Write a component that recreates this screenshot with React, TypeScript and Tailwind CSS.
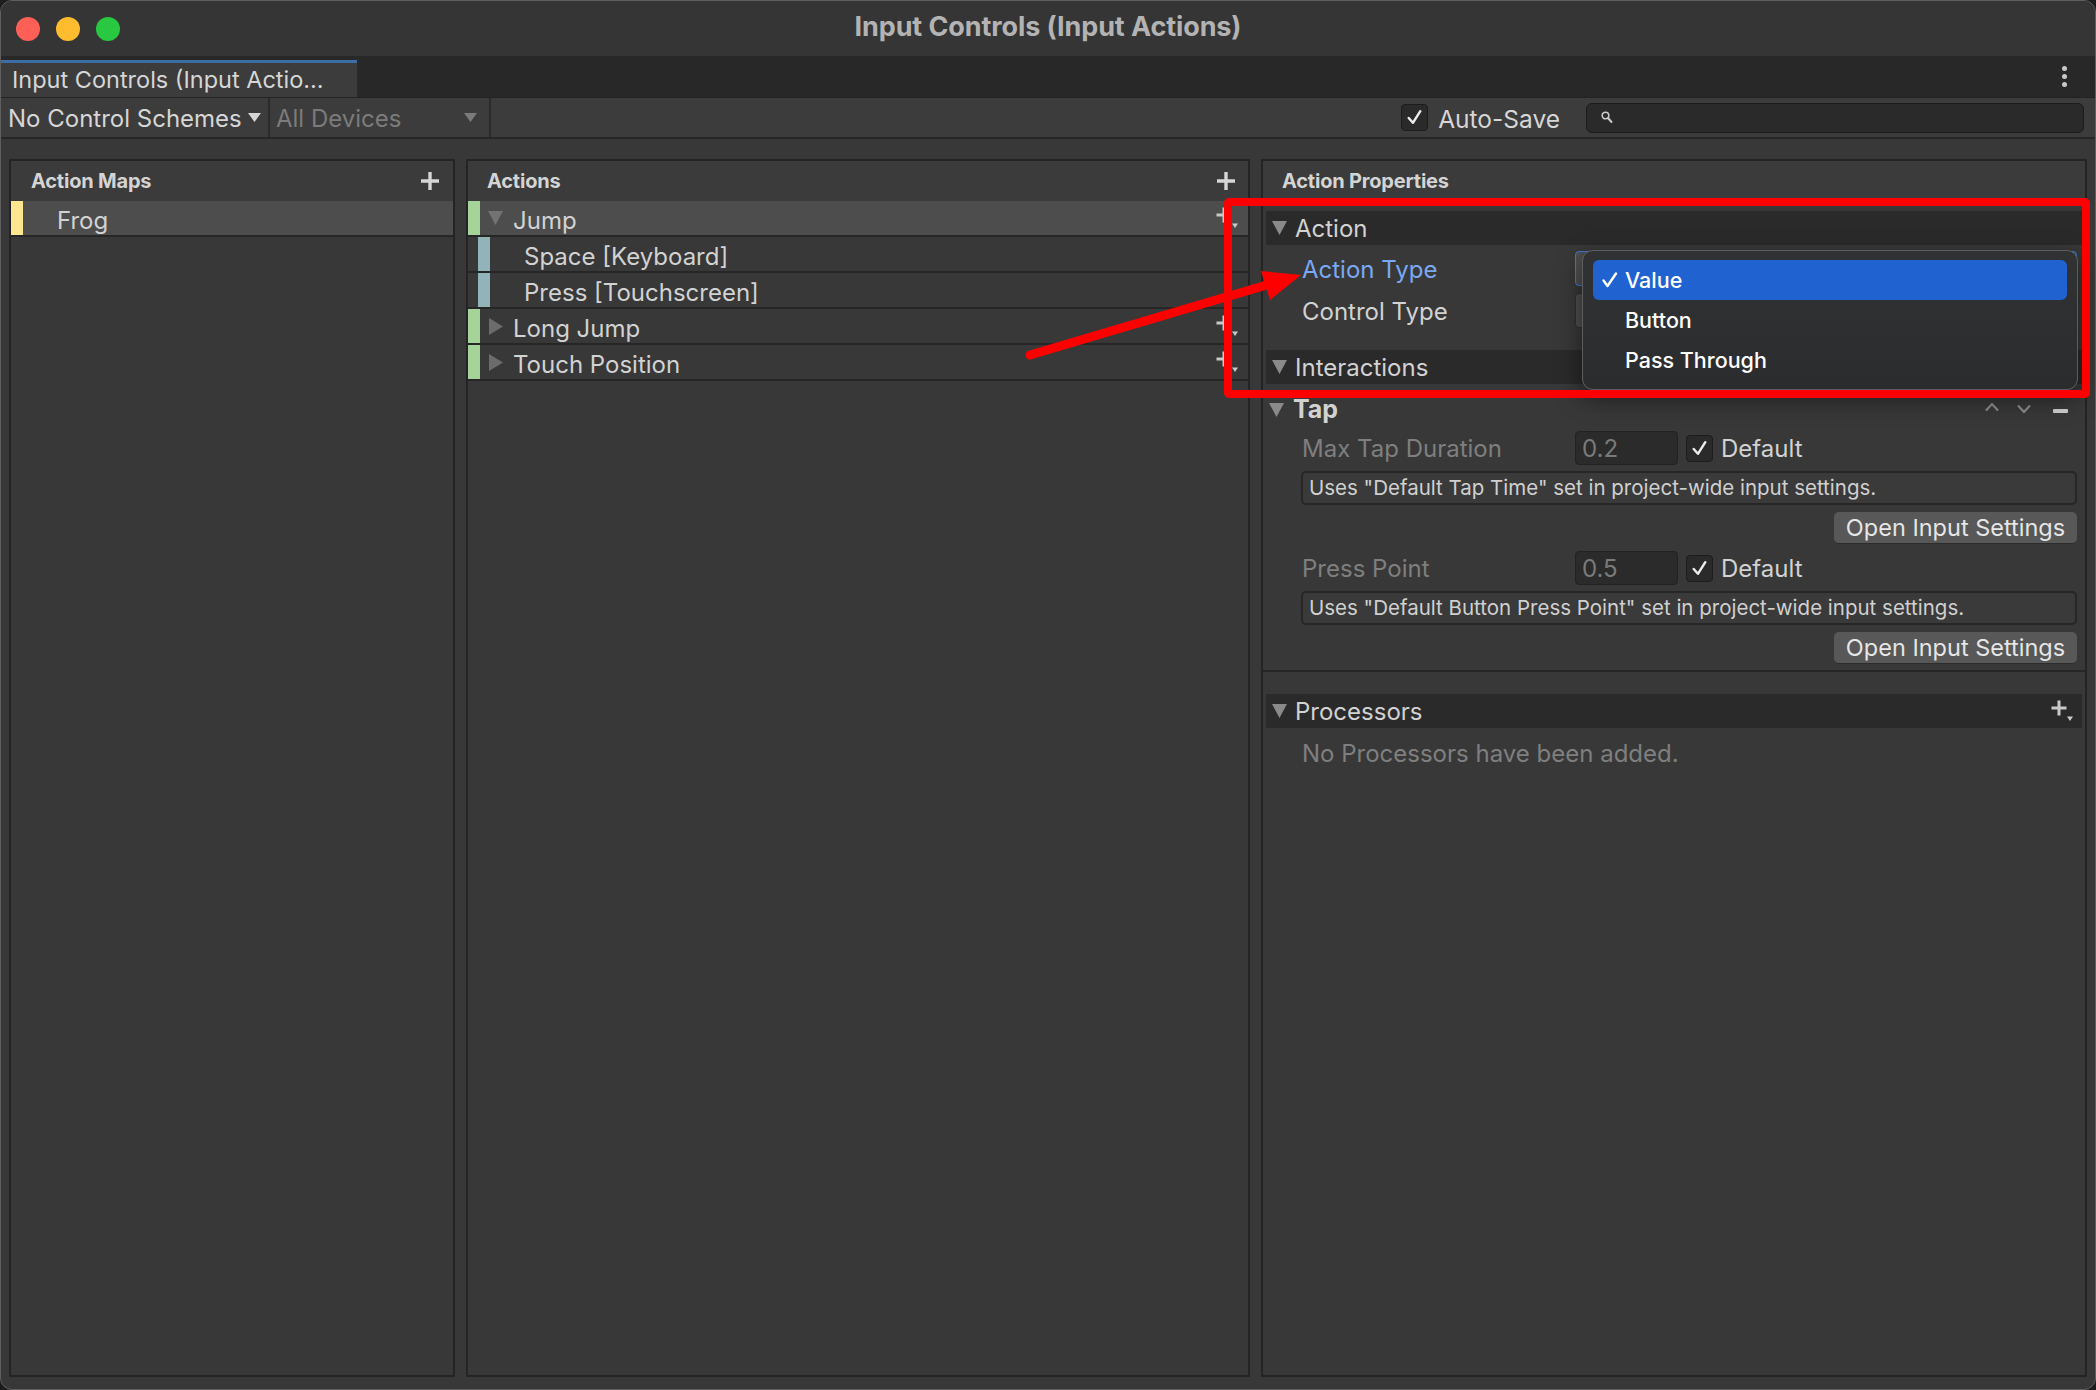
import React from "react";

const TXT = "text-[#d2d2d2]";

function TriDown({ color = "#7a7a7a" }: { color?: string }) {
  return (
    <svg width="15" height="14" viewBox="0 0 15 14" className="shrink-0">
      <path d="M0 0H15L7.5 14Z" fill={color} />
    </svg>
  );
}

function TriRight({ color = "#6f6f6f" }: { color?: string }) {
  return (
    <svg width="14" height="17" viewBox="0 0 14 17" className="shrink-0">
      <path d="M0 0L14 8.5L0 17Z" fill={color} />
    </svg>
  );
}

function Plus() {
  return (
    <svg width="20" height="20" viewBox="0 0 20 20" className="shrink-0">
      <path d="M10 1V19M1 10H19" stroke="#d6d6d6" strokeWidth="3.4" />
    </svg>
  );
}

function PlusDrop() {
  return (
    <svg width="24" height="24" viewBox="0 0 24 24" className="shrink-0">
      <path d="M9 1.5V16.5M1.5 9H16.5" stroke="#c9c9c9" strokeWidth="3" />
      <path d="M17 17.5H23L20 22Z" fill="#c9c9c9" />
    </svg>
  );
}

function Check({ size = 18 }: { size?: number }) {
  return (
    <svg width={size} height={size} viewBox="0 0 18 18">
      <path d="M3.5 9.5L7.5 14L14.5 3" stroke="#ececec" strokeWidth="2.3" fill="none" strokeLinecap="round" strokeLinejoin="round" />
    </svg>
  );
}

function CheckBox() {
  return (
    <div className="w-[27px] h-[27px] rounded-[4px] bg-[#2a2a2a] border border-[#1c1c1c] flex items-center justify-center shrink-0">
      <Check size={19} />
    </div>
  );
}

function FoldHeader({ label }: { label: string }) {
  return (
    <div className="h-[34px] bg-[#2a2a2a] flex items-center pl-[6px] pr-[8px]">
      <TriDown color="#8a8a8a" />
      <span className={`ml-[8px] text-[24px] pt-[2px] ${TXT}`}>{label}</span>
    </div>
  );
}

function PanelHeader({ title, plus, pl, pr }: { title: string; plus?: boolean; pl: string; pr: string }) {
  return (
    <div className={`h-[40px] shrink-0 bg-[#3b3b3b] flex items-center justify-between ${pl} ${pr}`}>
      <span className="text-[20px] font-bold text-[#d4d4d4] tracking-[-0.2px]">{title}</span>
      {plus ? <Plus /> : null}
    </div>
  );
}

function ActionRow({ label, open, selected }: { label: string; open?: boolean; selected?: boolean }) {
  return (
    <div className={`h-[36px] border-b-2 border-[#262626] flex items-center pr-[9px] ${selected ? "bg-[#4d4d4d]" : "bg-[#383838]"}`}>
      <div className="w-[12px] self-stretch bg-[#a5d49b]" />
      <div className="ml-[8px] w-[15px] flex justify-center">
        {open ? <TriDown color="#737373" /> : <TriRight color="#6c6c6c" />}
      </div>
      <span className={`ml-[10px] text-[24px] pt-[5px] ${TXT}`}>{label}</span>
      <div className="flex-1" />
      <PlusDrop />
    </div>
  );
}

function BindingRow({ label }: { label: string }) {
  return (
    <div className="h-[36px] border-b-2 border-[#262626] flex items-center">
      <div className="ml-[10px] w-[12px] self-stretch bg-[#93b3bb]" />
      <span className={`ml-[34px] text-[24px] pt-[5px] ${TXT}`}>{label}</span>
    </div>
  );
}

function ParamBlock({ label, value, help }: { label: string; value: string; help: string }) {
  return (
    <>
      <div className="mt-[4px] h-[34px] flex items-center pl-[36px] pr-[5px]">
        <span className="w-[273px] text-[24px] pt-[2px] text-[#7f7f7f]">{label}</span>
        <div className="w-[103px] h-[34px] rounded-[4px] bg-[#2b2b2b] border border-[#222222] flex items-center pl-[6px] pt-[2px] text-[24px] text-[#7a7a7a]">
          {value}
        </div>
        <div className="ml-[8px]">
          <CheckBox />
        </div>
        <span className={`ml-[8px] text-[24px] pt-[2px] ${TXT}`}>Default</span>
      </div>
      <div className="mt-[6px] ml-[35px] mr-[5px] h-[34px] rounded-[5px] border-2 border-[#262626] bg-[#3a3a3a] flex items-center pl-[6px] pt-[1px] text-[20.5px] text-[#d0d0d0]">
        {help}
      </div>
      <div className="mt-[7px] mr-[5px] flex justify-end">
        <div className="w-[243px] h-[32px] rounded-[5px] bg-[#585858] border-b border-[#2c2c2c] flex items-center justify-center text-[23.5px] text-[#e6e6e6]">
          Open Input Settings
        </div>
      </div>
    </>
  );
}

export default function App() {
  return (
    <div className="relative w-[2096px] h-[1390px] bg-[#1d1d1d] font-['Inter','Noto_Sans',sans-serif]">
      <div className="w-full h-full rounded-[12px] border border-[#5f5f5f] bg-[#383838] overflow-hidden flex flex-col">
        {/* Title bar */}
        <div className="h-[55px] shrink-0 bg-[#353535] grid grid-cols-[1fr_auto_1fr] items-center">
          <div className="flex items-center gap-[16px] pl-[15px]">
            <span className="w-[24px] h-[24px] rounded-full bg-[#fe5f57]" />
            <span className="w-[24px] h-[24px] rounded-full bg-[#febc2e]" />
            <span className="w-[24px] h-[24px] rounded-full bg-[#28c840]" />
          </div>
          <div className="text-[27px] font-bold text-[#b3b3b3] tracking-[-0.1px] pb-[2px]">Input Controls (Input Actions)</div>
          <div />
        </div>

        {/* Tab bar */}
        <div className="h-[42px] shrink-0 bg-[#282828] flex items-end border-b border-[#232323]">
          <div className="w-[356px] h-[37px] bg-[#3c3c3c] border-t-[3px] border-[#3b6ea5] flex items-center pl-[11px] text-[23.5px] text-[#d6d6d6]">
            Input Controls (Input Actio...
          </div>
          <div className="flex-1" />
          <div className="h-full flex flex-col items-center justify-center gap-[3px] mr-[28px]">
            <span className="w-[5px] h-[5px] rounded-full bg-[#c8c8c8]" />
            <span className="w-[5px] h-[5px] rounded-full bg-[#c8c8c8]" />
            <span className="w-[5px] h-[5px] rounded-full bg-[#c8c8c8]" />
          </div>
        </div>

        {/* Toolbar */}
        <div className="h-[41px] shrink-0 bg-[#3c3c3c] border-b-2 border-[#262626] flex items-stretch">
          <div className="w-[267px] flex items-center pl-[7px]">
            <span className="text-[24px] pt-[2px] text-[#d6d6d6]">No Control Schemes</span>
            <svg width="13" height="9" viewBox="0 0 13 9" className="ml-[6px]">
              <path d="M0 0H13L6.5 9Z" fill="#d6d6d6" />
            </svg>
          </div>
          <div className="w-[2px] bg-[#2b2b2b]" />
          <div className="w-[219px] flex items-center pl-[6px] pr-[12px]">
            <span className="text-[24px] pt-[2px] text-[#7b7b7b]">All Devices</span>
            <div className="flex-1" />
            <svg width="13" height="9" viewBox="0 0 13 9">
              <path d="M0 0H13L6.5 9Z" fill="#7b7b7b" />
            </svg>
          </div>
          <div className="w-[2px] bg-[#2b2b2b]" />
          <div className="flex-1" />
          <div className="flex items-center">
            <CheckBox />
            <span className="ml-[10px] text-[24.5px] pt-[4px] text-[#d6d6d6]">Auto-Save</span>
            <div className="ml-[26px] mr-[11px] w-[498px] h-[30px] rounded-[6px] bg-[#2a2a2a] border border-[#1b1b1b] flex items-center pl-[14px]">
              <svg width="12" height="13" viewBox="0 0 12 13">
                <circle cx="4.5" cy="4.5" r="3.3" stroke="#c9c9c9" strokeWidth="1.6" fill="none" />
                <path d="M7 7L10.5 11" stroke="#c9c9c9" strokeWidth="2" strokeLinecap="round" />
              </svg>
            </div>
          </div>
        </div>

        {/* Panels */}
        <div className="flex-1 min-h-0 flex gap-[11px] px-[8px] pt-[20px] pb-[12px]">
          {/* Action Maps */}
          <div className="w-[446px] border-2 border-[#242424] bg-[#383838] flex flex-col">
            <PanelHeader title="Action Maps" plus pl="pl-[20px]" pr="pr-[13px]" />
            <div className="h-[36px] border-b-2 border-[#262626] bg-[#4d4d4d] flex items-center">
              <div className="w-[12px] self-stretch bg-[#fde690]" />
              <span className={`ml-[34px] text-[24px] pt-[5px] ${TXT}`}>Frog</span>
            </div>
          </div>

          {/* Actions */}
          <div className="w-[784px] border-2 border-[#242424] bg-[#383838] flex flex-col">
            <PanelHeader title="Actions" plus pl="pl-[19px]" pr="pr-[12px]" />
            <ActionRow label="Jump" open selected />
            <BindingRow label="Space [Keyboard]" />
            <BindingRow label="Press [Touchscreen]" />
            <ActionRow label="Long Jump" />
            <ActionRow label="Touch Position" />
          </div>

          {/* Action Properties */}
          <div className="w-[826px] border-2 border-[#242424] bg-[#383838] flex flex-col">
            <PanelHeader title="Action Properties" pl="pl-[19px]" pr="pr-[12px]" />
            <div className="px-[3px] flex flex-col">
              <div className="mt-[10px]">
                <FoldHeader label="Action" />
              </div>
              <div className="mt-[6px] h-[35px] flex items-center pl-[36px] pr-[5px]">
                <span className="w-[273px] text-[24px] pt-[3px] text-[#7aa8f2]">Action Type</span>
                <div className="flex-1 h-[35px] rounded-[4px] bg-[#4f4f4f] border border-[#3b7bd8]" />
              </div>
              <div className="mt-[7px] h-[35px] flex items-center pl-[36px] pr-[5px]">
                <span className={`w-[273px] text-[24px] pt-[2px] ${TXT}`}>Control Type</span>
                <div className="flex-1 h-[35px] rounded-[4px] bg-[#4f4f4f] border border-[#303030]" />
              </div>
              <div className="mt-[22px]">
                <FoldHeader label="Interactions" />
              </div>
              <div className="mt-[9px] h-[34px] flex items-center pl-[3px] pr-[14px]">
                <TriDown color="#8a8a8a" />
                <span className={`ml-[9px] text-[25px] font-bold ${TXT}`}>Tap</span>
                <div className="flex-1" />
                <svg width="16" height="10" viewBox="0 0 16 10" className="mb-[6px]">
                  <path d="M2 8.5L8 2L14 8.5" stroke="#8c8c8c" strokeWidth="2.2" fill="none" />
                </svg>
                <svg width="16" height="10" viewBox="0 0 16 10" className="ml-[16px] mb-[2px]">
                  <path d="M2 1.5L8 8L14 1.5" stroke="#8c8c8c" strokeWidth="2.2" fill="none" />
                </svg>
                <div className="ml-[21px] w-[15px] h-[4px] rounded-[1px] bg-[#cfcfcf] mt-[2px]" />
              </div>
              <ParamBlock label="Max Tap Duration" value="0.2" help={'Uses "Default Tap Time" set in project-wide input settings.'} />
              <div className="mt-[3px]">
                <ParamBlock label="Press Point" value="0.5" help={'Uses "Default Button Press Point" set in project-wide input settings.'} />
              </div>
            </div>
            <div className="mt-[6px] h-[2px] bg-[#262626]" />
            <div className="px-[3px] flex flex-col">
              <div className="mt-[22px] h-[34px] bg-[#2a2a2a] flex items-center pl-[6px] pr-[8px]">
                <TriDown color="#8a8a8a" />
                <span className={`ml-[8px] text-[24px] pt-[2px] ${TXT}`}>Processors</span>
                <div className="flex-1" />
                <PlusDrop />
              </div>
              <div className="mt-[8px] h-[34px] flex items-center pl-[36px] pt-[2px] text-[24px] text-[#7f7f7f]">
                No Processors have been added.
              </div>
            </div>
          </div>
        </div>
      </div>

      {/* Popup menu */}
      <div className="absolute left-[1582px] top-[250px] w-[496px] h-[140px] rounded-[11px] border border-[#5c5d5f] bg-gradient-to-b from-[#313234] to-[#2b2c2e] shadow-[0_8px_24px_rgba(0,0,0,0.5)] flex flex-col py-[9px] px-[10px]">
        <div className="h-[40px] rounded-[6px] bg-[#1f62d0] flex items-center pl-[8px]">
          <svg width="18" height="18" viewBox="0 0 18 18" className="mr-[6px]">
            <path d="M2.5 9.5L6.5 15L15 2.5" stroke="#ffffff" strokeWidth="2.4" fill="none" strokeLinecap="round" strokeLinejoin="round" />
          </svg>
          <span className="text-[21.5px] font-medium text-white">Value</span>
        </div>
        <div className="h-[40px] flex items-center pl-[32px] text-[21.5px] font-medium text-white">Button</div>
        <div className="h-[40px] flex items-center pl-[32px] text-[21.5px] font-medium text-white">Pass Through</div>
      </div>

      {/* Red annotation rectangle */}
      <div className="absolute left-[1224px] top-[198px] w-[866px] h-[200px] border-[8px] border-[#ff0000] rounded-[5px] pointer-events-none" />

      {/* Red arrow */}
      <svg className="absolute left-0 top-0 pointer-events-none" width="2096" height="1390" viewBox="0 0 2096 1390">
        <path d="M1030 355L1270 284" stroke="#ff0000" strokeWidth="9" strokeLinecap="round" />
        <path d="M1301 275L1261 271L1270 300Z" fill="#ff0000" />
      </svg>
    </div>
  );
}
